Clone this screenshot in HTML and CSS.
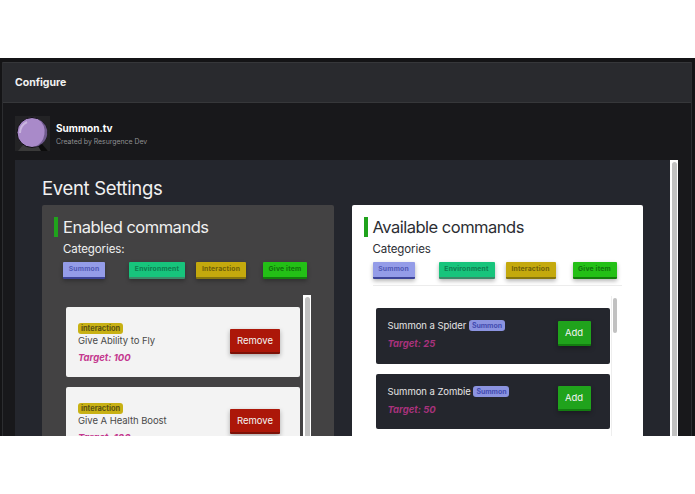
FILE: index.html
```html
<!DOCTYPE html>
<html lang="en">
<head>
    <meta charset="UTF-8">
    <meta name="viewport" content="width=device-width, initial-scale=1.0">
    <title>Configure</title>
    <link rel="stylesheet" href="styles.css">
</head>
<body>

<div class="frame">
    <div class="frame-inner">
        <div class="topbar">Configure</div>

        <div class="ext-head">
            <div class="ext-logo">
                <svg width="35" height="35" viewBox="0 0 35 35">
                    <rect width="35" height="35" fill="#232325"/>
                    <path d="M3 35 L8 29 H27 L33 35 Z" fill="#3a3a3a"/>
                    <path d="M22 28 H27 L33 35 H26 Z" fill="#0c0c0c"/>
                    <circle cx="17" cy="16.5" r="15" fill="#a98ac9" stroke="#0d0b10" stroke-width="1"/>
                    <path d="M23 3 A14.5 14.5 0 0 1 19 31 A16 16 0 0 0 23 3 Z" fill="#6f5a8c"/>
                    <path d="M5 17 A12.5 12.5 0 0 1 12 6" fill="none" stroke="#c9b5de" stroke-width="2"/>
                </svg>
            </div>
            <div class="ext-info">
                <div class="ext-name">Summon.tv</div>
                <div class="ext-by">Created by Resurgence Dev</div>
            </div>
        </div>

        <div class="scroller">
            <div class="settings">
                <h1>Event Settings</h1>
                <div class="columns">
                    <section class="panel panel-dark">
                        <h2>Enabled commands</h2>
                        <h3>Categories:</h3>
                        <div class="cats">
                            <span class="cat cat-summon">Summon</span>
                            <span class="cat cat-env">Environment</span>
                            <span class="cat cat-inter">Interaction</span>
                            <span class="cat cat-give">Give item</span>
                        </div>
                        <div class="list-wrap">
                            <div class="list">
                                <div class="cmd cmd-light">
                                    <div class="cmd-text">
                                        <span class="tag tag-inter">interaction</span>
                                        <div class="cmd-name">Give Ability to Fly</div>
                                        <div class="target">Target: 100</div>
                                    </div>
                                    <button class="btn btn-remove">Remove</button>
                                </div>
                                <div class="cmd cmd-light">
                                    <div class="cmd-text">
                                        <span class="tag tag-inter">interaction</span>
                                        <div class="cmd-name">Give A Health Boost</div>
                                        <div class="target">Target: 100</div>
                                    </div>
                                    <button class="btn btn-remove">Remove</button>
                                </div>
                            </div>
                            <div class="track track-full"><div class="thumb"></div></div>
                        </div>
                    </section>

                    <section class="panel panel-light">
                        <h2>Available commands</h2>
                        <h3>Categories</h3>
                        <div class="cats cats-rule">
                            <span class="cat cat-summon">Summon</span>
                            <span class="cat cat-env">Environment</span>
                            <span class="cat cat-inter">Interaction</span>
                            <span class="cat cat-give">Give item</span>
                        </div>
                        <div class="list-wrap list-wrap-light">
                            <div class="list">
                                <div class="cmd cmd-dark">
                                    <div class="cmd-text">
                                        <div class="cmd-name">Summon a Spider <span class="tag tag-summon">Summon</span></div>
                                        <div class="target">Target: 25</div>
                                    </div>
                                    <button class="btn btn-add">Add</button>
                                </div>
                                <div class="cmd cmd-dark">
                                    <div class="cmd-text">
                                        <div class="cmd-name">Summon a Zombie <span class="tag tag-summon">Summon</span></div>
                                        <div class="target">Target: 50</div>
                                    </div>
                                    <button class="btn btn-add">Add</button>
                                </div>
                            </div>
                            <div class="track track-light"><div class="thumb thumb-short"></div></div>
                        </div>
                    </section>
                </div>
            </div>
            <div class="track track-page"><div class="thumb"></div></div>
        </div>
    </div>
</div>

</body>
</html>
```

FILE: styles.css
```css
html, body {
    height: 100%;
}

body {
    margin: 0;
    background-color: #fff;
    font-family: Inter, "Liberation Sans", sans-serif;
    padding-top: 58px;
    box-sizing: border-box;
    overflow: hidden;
}

.frame {
    height: 378px;
    overflow: hidden;
    background-color: #141416;
    padding: 4px 3px 0 2px;
    box-sizing: border-box;
}

.frame-inner {
    height: 100%;
    background-color: #18181b;
    border-left: 1px solid #2c2d30;
    border-right: 1px solid #2c2d30;
}

.topbar {
    height: 39px;
    line-height: 40px;
    padding-left: 12px;
    background-color: #292a2e;
    border-top: 1px solid #36373a;
    border-bottom: 1px solid #36373a;
    color: #f2f2f2;
    font-size: 10.5px;
    font-weight: 700;
}

.ext-head {
    display: flex;
    align-items: flex-start;
    gap: 6px;
    height: 57px;
    padding: 13px 0 0 12px;
    box-sizing: border-box;
}

.ext-info {
    padding-top: 6px;
}

.ext-name {
    color: #fff;
    font-size: 10px;
    font-weight: 700;
    line-height: 13px;
}

.ext-by {
    margin-top: 2px;
    color: #8f8f92;
    font-size: 6.9px;
    line-height: 9px;
}

.ext-logo {
    height: 35px;
}

.scroller {
    display: flex;
    margin: 0 13px 0 12px;
    background-color: #24262d;
    height: 300px;
}

.settings {
    flex: 1;
    padding: 17px 0 0 27px;
    min-width: 0;
}

h1 {
    margin: 0 0 5px;
    color: #f1f1f1;
    font-size: 18.5px;
    font-weight: 400;
    letter-spacing: -0.33px;
    line-height: 23px;
}

.columns {
    display: flex;
    gap: 18px;
}

.panel {
    width: 291.5px;
    padding: 12px 0 0 21px;
    border-radius: 2px;
    box-sizing: border-box;
}

.panel-dark {
    background-color: #434243;
    color: #f0f0f0;
}

.panel-light {
    background-color: #fff;
    color: #2c2e33;
}

h2 {
    position: relative;
    margin: 0;
    font-size: 16.5px;
    font-weight: 400;
    letter-spacing: -0.5px;
    line-height: 20px;
}

h2::before {
    content: "";
    position: absolute;
    left: -9px;
    top: 0;
    width: 4px;
    height: 20px;
    background-color: #20a31c;
}

h3 {
    margin: 5px 0 0;
    font-size: 11.5px;
    font-weight: 400;
    letter-spacing: -0.1px;
    line-height: 14px;
}

.cats {
    display: flex;
    margin-top: 6px;
    width: 249px;
    padding-bottom: 6px;
}

.cats-rule {
    border-bottom: 1px solid #ececec;
}

.cat {
    display: block;
    height: 15px;
    line-height: 14px;
    border-radius: 1px;
    font-size: 6.8px;
    font-weight: 700;
    letter-spacing: 0.2px;
    text-align: center;
    box-shadow: 0 2px 4px rgba(0, 0, 0, 0.3);
}

.cat-summon {
    width: 42px;
    margin-right: 24px;
    background-color: #949ce8;
    color: #5058b4;
    border-bottom: 2px solid #3d4499;
}

.cat-env {
    width: 56px;
    margin-right: 11px;
    background-color: #17c47c;
    color: #0e7d4f;
    border-bottom: 2px solid #3b8a69;
}

.cat-inter {
    width: 50px;
    margin-right: 17px;
    background-color: #c4a90d;
    color: #6f5f08;
    border-bottom: 2px solid #86760f;
}

.cat-give {
    width: 44px;
    background-color: #23c016;
    color: #0f730a;
    border-bottom: 2px solid #137c0c;
}

.list-wrap {
    display: flex;
    margin-top: 1px;
    padding: 9px 0 0 3px;
    width: 255px;
    height: 300px;
    overflow: hidden;
}

.list {
    width: 234px;
    padding-top: 12px;
}

.list-wrap-light {
    margin-top: 0;
    padding-top: 10px;
}

.cmd {
    display: flex;
    align-items: center;
    justify-content: space-between;
    border-radius: 2px;
    margin-bottom: 10px;
    box-sizing: border-box;
}

.cmd-light {
    height: 70px;
    padding: 0 20px 0 12px;
    background-color: #f3f3f3;
    color: #4a4a4a;
}

.cmd-light .cmd-text {
    padding-top: 3px;
}

.cmd-dark {
    height: 55.5px;
    padding: 0 19px 0 12px;
    background-color: #24262d;
    color: #e4e4e4;
}

.cmd-dark .cmd-text {
    padding-bottom: 2px;
}

.cmd-name {
    font-size: 9.5px;
    letter-spacing: -0.05px;
    line-height: 13px;
}

.target {
    margin-top: 4px;
    color: #c4388e;
    font-size: 9.5px;
    font-style: italic;
    font-weight: 700;
    line-height: 13px;
}

.cmd-dark .target {
    margin-top: 5px;
    color: #a8327c;
}

.tag {
    display: inline-block;
    height: 11px;
    line-height: 11px;
    padding: 0 3px;
    border-radius: 3px;
    font-size: 7px;
    font-weight: 700;
    vertical-align: 1px;
}

.tag-inter {
    background-color: #c8b114;
    color: #5c5210;
    display: block;
    width: max-content;
    font-size: 7.4px;
}

.tag-summon {
    background-color: #8b93e0;
    color: #444cb0;
}

.btn {
    border: none;
    border-radius: 1px;
    color: #f4f4f4;
    font-family: inherit;
    font-size: 9.5px;
    padding: 0;
    box-shadow: 0 2px 5px rgba(0, 0, 0, 0.3);
}

.btn-remove {
    width: 50px;
    height: 25px;
    margin-bottom: 1px;
    background-color: #ac1709;
    border-bottom: 2px solid #7d1208;
}

.btn-add {
    width: 33px;
    height: 25px;
    margin-bottom: 5px;
    background-color: #20a31c;
    border-bottom: 2px solid #137c10;
}

.track {
    width: 8px;
    background-color: #fff;
    padding: 2px 1.5px;
    box-sizing: border-box;
    flex-shrink: 0;
}

.track-full {
    margin-left: 3px;
}

.track-light {
    margin-left: 1px;
    border-left: 1px solid #eee;
}

.track-page {
    margin-left: auto;
    height: 300px;
}

.thumb {
    height: 100%;
    border-radius: 3px;
    background-color: #c1c1c1;
}

.thumb-short {
    height: 35px;
}
```
